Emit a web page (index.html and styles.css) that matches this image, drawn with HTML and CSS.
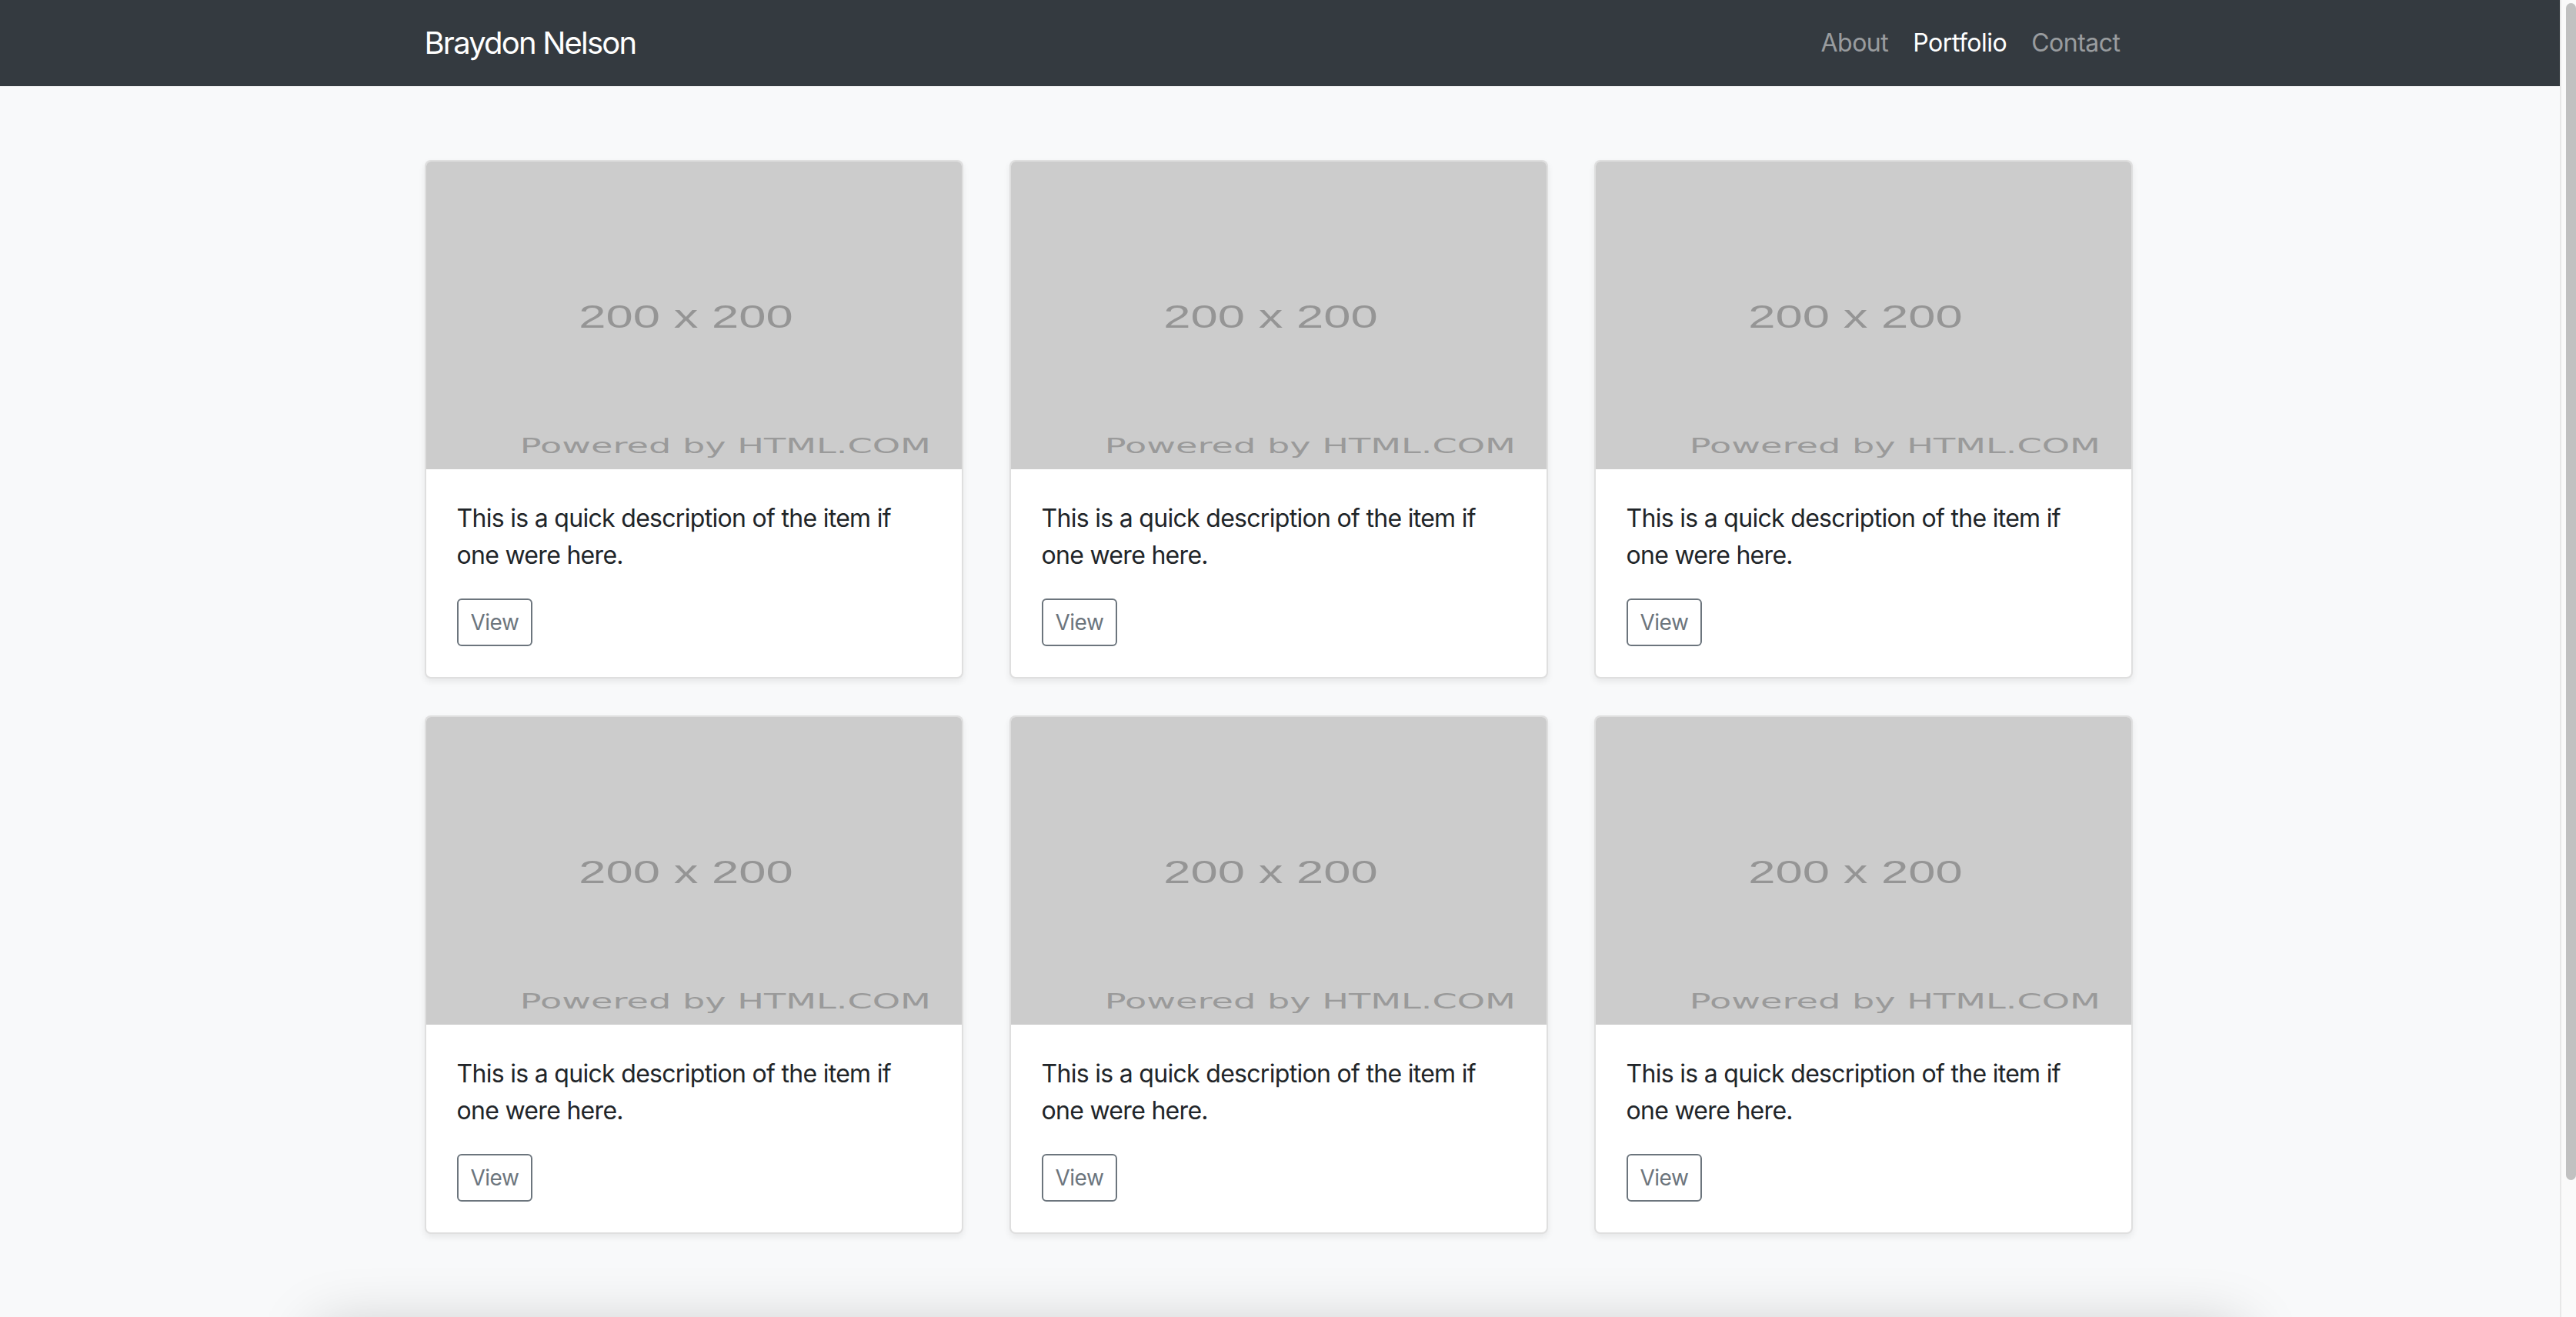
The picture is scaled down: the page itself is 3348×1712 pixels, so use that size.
FILE: index.html
```html
<!DOCTYPE html>
<html lang="en">
<head>
<meta charset="utf-8">
<title>Braydon Nelson — Portfolio</title>
<link rel="stylesheet" href="styles.css">
</head>
<body>
<div class="viewport">
  <header class="navbar">
    <div class="container nav-inner">
      <a class="brand" href="#">Braydon Nelson</a>
      <nav class="nav-links">
        <a class="nav-link" href="#">About</a>
        <a class="nav-link active" href="#">Portfolio</a>
        <a class="nav-link" href="#">Contact</a>
      </nav>
    </div>
  </header>

  <main class="album">
    <div class="container">
      <div class="card-grid">
        <div class="card">
          <svg class="card-img" viewBox="0 0 200 200" preserveAspectRatio="none"><rect width="200" height="200" fill="#cccccc"/><text class="ph-size" x="57" y="108" textLength="80" lengthAdjust="spacingAndGlyphs">200 x 200</text><text class="ph-brand" x="35" y="189.5" textLength="153.5" lengthAdjust="spacingAndGlyphs">Powered by HTML.COM</text></svg>
          <div class="card-body">
            <p class="card-text">This is a quick description of the item if one were here.</p>
            <button class="btn" type="button">View</button>
          </div>
        </div>
        <div class="card">
          <svg class="card-img" viewBox="0 0 200 200" preserveAspectRatio="none"><rect width="200" height="200" fill="#cccccc"/><text class="ph-size" x="57" y="108" textLength="80" lengthAdjust="spacingAndGlyphs">200 x 200</text><text class="ph-brand" x="35" y="189.5" textLength="153.5" lengthAdjust="spacingAndGlyphs">Powered by HTML.COM</text></svg>
          <div class="card-body">
            <p class="card-text">This is a quick description of the item if one were here.</p>
            <button class="btn" type="button">View</button>
          </div>
        </div>
        <div class="card">
          <svg class="card-img" viewBox="0 0 200 200" preserveAspectRatio="none"><rect width="200" height="200" fill="#cccccc"/><text class="ph-size" x="57" y="108" textLength="80" lengthAdjust="spacingAndGlyphs">200 x 200</text><text class="ph-brand" x="35" y="189.5" textLength="153.5" lengthAdjust="spacingAndGlyphs">Powered by HTML.COM</text></svg>
          <div class="card-body">
            <p class="card-text">This is a quick description of the item if one were here.</p>
            <button class="btn" type="button">View</button>
          </div>
        </div>
        <div class="card">
          <svg class="card-img" viewBox="0 0 200 200" preserveAspectRatio="none"><rect width="200" height="200" fill="#cccccc"/><text class="ph-size" x="57" y="108" textLength="80" lengthAdjust="spacingAndGlyphs">200 x 200</text><text class="ph-brand" x="35" y="189.5" textLength="153.5" lengthAdjust="spacingAndGlyphs">Powered by HTML.COM</text></svg>
          <div class="card-body">
            <p class="card-text">This is a quick description of the item if one were here.</p>
            <button class="btn" type="button">View</button>
          </div>
        </div>
        <div class="card">
          <svg class="card-img" viewBox="0 0 200 200" preserveAspectRatio="none"><rect width="200" height="200" fill="#cccccc"/><text class="ph-size" x="57" y="108" textLength="80" lengthAdjust="spacingAndGlyphs">200 x 200</text><text class="ph-brand" x="35" y="189.5" textLength="153.5" lengthAdjust="spacingAndGlyphs">Powered by HTML.COM</text></svg>
          <div class="card-body">
            <p class="card-text">This is a quick description of the item if one were here.</p>
            <button class="btn" type="button">View</button>
          </div>
        </div>
        <div class="card">
          <svg class="card-img" viewBox="0 0 200 200" preserveAspectRatio="none"><rect width="200" height="200" fill="#cccccc"/><text class="ph-size" x="57" y="108" textLength="80" lengthAdjust="spacingAndGlyphs">200 x 200</text><text class="ph-brand" x="35" y="189.5" textLength="153.5" lengthAdjust="spacingAndGlyphs">Powered by HTML.COM</text></svg>
          <div class="card-body">
            <p class="card-text">This is a quick description of the item if one were here.</p>
            <button class="btn" type="button">View</button>
          </div>
        </div>
      </div>
    </div>
  </main>

  <footer class="footer"></footer>
</div>
<div class="scrollbar"><div class="scroll-thumb"></div></div>
</body>
</html>
```

FILE: styles.css
```css
* {
  box-sizing: border-box;
}

html, body {
  margin: 0;
  padding: 0;
  height: 1712px;
  overflow: hidden;
}

body {
  display: flex;
  font-family: Inter, "Liberation Sans", sans-serif;
  color: #212529;
  background: #ffffff;
}

.viewport {
  flex: none;
  width: 3327px;
  height: 1712px;
  overflow: hidden;
  background: #ffffff;
}

.container {
  width: 2280px;
  margin-left: calc(50% - 1142px);
  padding: 0 30px;
}

/* Navbar */
.navbar {
  background: #343a40;
  padding: 16px 0;
  height: 112px;
}

.nav-inner {
  display: flex;
  justify-content: space-between;
  align-items: center;
}

.brand {
  color: #ffffff;
  text-decoration: none;
  font-size: 40px;
  line-height: 60px;
  padding: 10px 0;
  letter-spacing: -1.8px;
}

.nav-links {
  display: flex;
}

.nav-link {
  color: rgba(255, 255, 255, 0.5);
  text-decoration: none;
  font-size: 32px;
  line-height: 48px;
  padding: 16px 16px;
  letter-spacing: -0.5px;
}

.nav-link.active {
  color: #ffffff;
}

/* Album */
.album {
  background: #f8f9fa;
  padding: 96px 0;
}

.card-grid {
  display: grid;
  grid-template-columns: repeat(3, 700px);
  column-gap: 60px;
  row-gap: 48px;
  padding-bottom: 48px;
}

.card {
  background: #ffffff;
  border: 2px solid rgba(0, 0, 0, 0.125);
  border-radius: 8px;
  box-shadow: 0 4px 8px rgba(0, 0, 0, 0.075);
  overflow: hidden;
}

.card-img {
  display: block;
  width: 100%;
  height: 400px;
}

.ph-size {
  font-family: "Liberation Sans", sans-serif;
  font-size: 21px;
  fill: #959595;
}

.ph-brand {
  font-family: "DejaVu Sans", sans-serif;
  font-size: 13px;
  fill: #9a9a9a;
}

.card-body {
  padding: 40px;
}

.card-text {
  margin: 0 0 32px;
  font-size: 32px;
  line-height: 48px;
  letter-spacing: -0.7px;
}

.btn {
  display: inline-block;
  font-family: Inter, "Liberation Sans", sans-serif;
  font-size: 28px;
  line-height: 42px;
  padding: 8px 16px;
  border: 2px solid #6c757d;
  border-radius: 6px;
  background: transparent;
  color: #6c757d;
  letter-spacing: -0.5px;
}

/* Footer (below the fold, only its shadow shows) */
.footer {
  width: 2540px;
  height: 200px;
  margin: 0 auto;
  background: #f8f9fa;
  box-shadow: 0 -40px 80px -20px rgba(0, 0, 0, 0.22);
}

/* Fake browser scrollbar */
.scrollbar {
  flex: none;
  width: 21px;
  height: 1712px;
  background: #fafafa;
  border-left: 2px solid #e8e8e8;
  padding: 4px 0 0 6px;
}

.scroll-thumb {
  width: 13px;
  height: 1530px;
  background: #c1c1c1;
  border-radius: 7px;
}
```
